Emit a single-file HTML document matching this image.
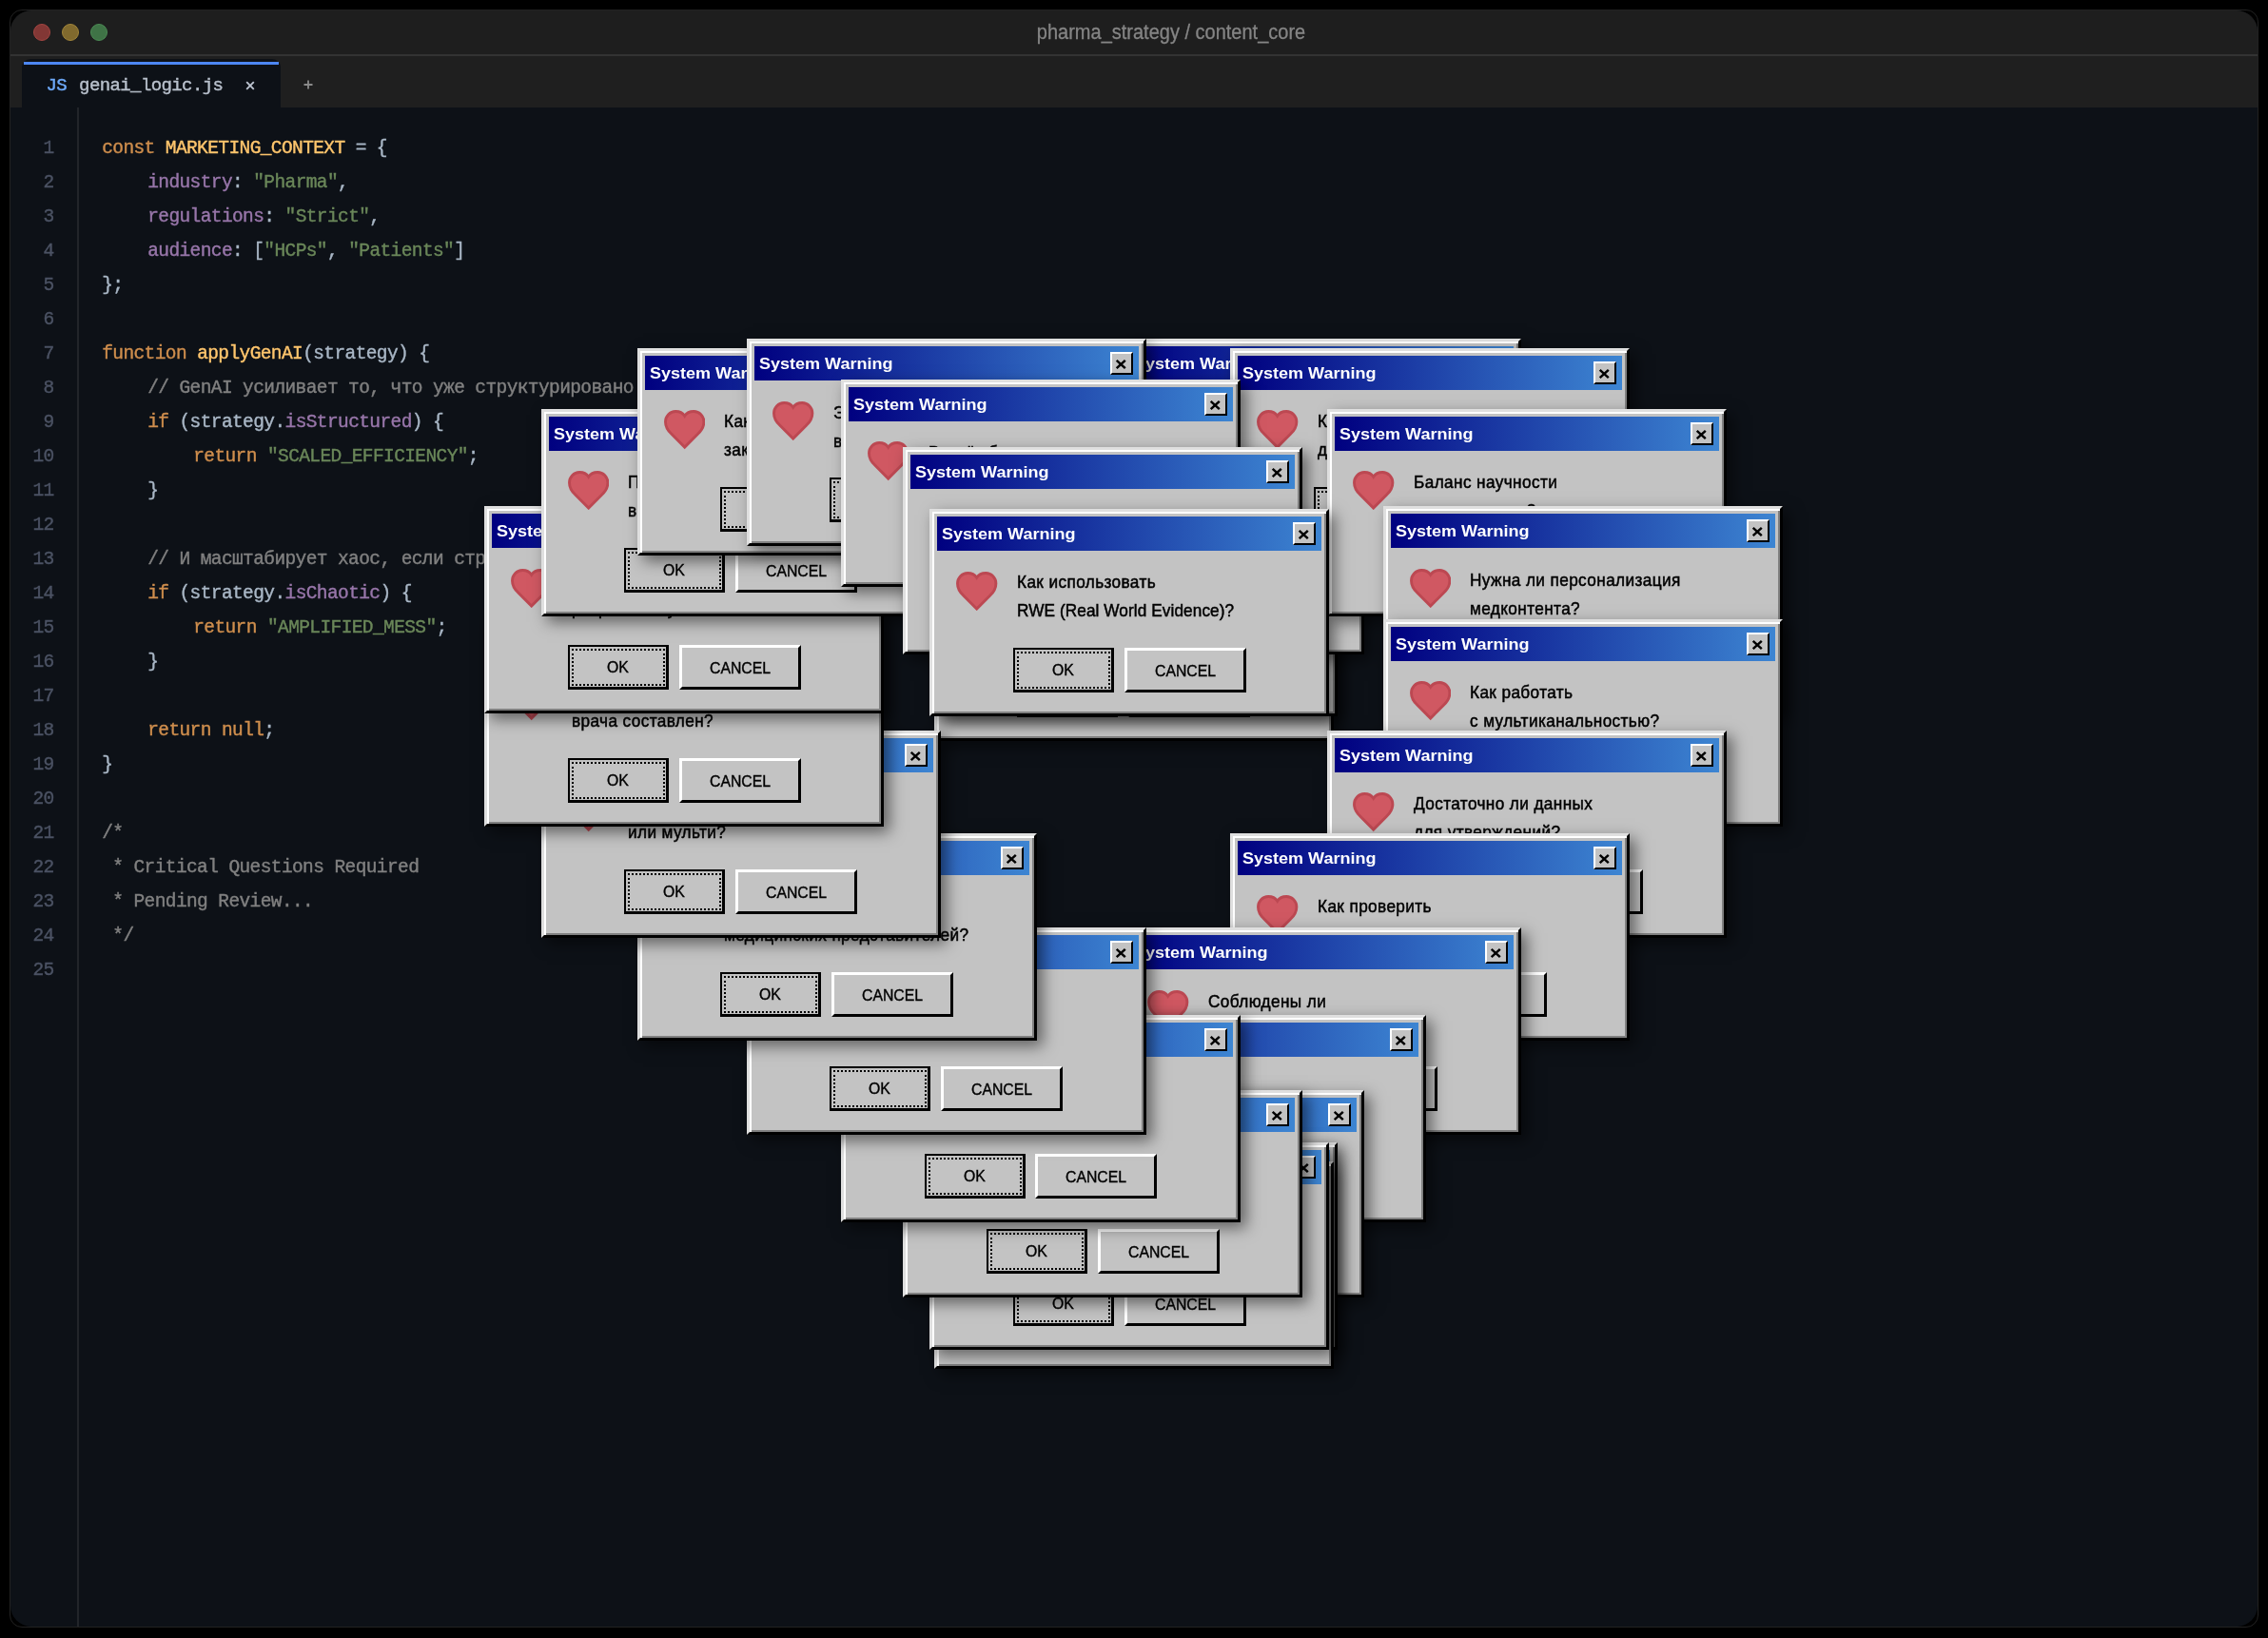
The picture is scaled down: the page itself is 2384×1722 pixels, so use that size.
<!DOCTYPE html>
<html lang="ru"><head><meta charset="utf-8"><title>genai_logic.js</title>
<style>
html,body{margin:0;padding:0;background:#000;}
body{width:2384px;height:1722px;overflow:hidden;position:relative;font-family:"Liberation Sans",sans-serif;}
.win{position:absolute;left:10px;top:10px;width:2362px;height:1699px;border:1px solid #222;border-radius:13px;overflow:hidden;background:#000;}
.inner{position:absolute;left:0;top:0;right:0;bottom:0;border-radius:22px;overflow:hidden;background:#0d1117;}
.pg{position:absolute;left:-11px;top:-11px;width:2384px;height:1722px;will-change:transform;}
.titlebar{position:absolute;left:0;top:0;width:2384px;height:57px;background:#1e1e1e;border-bottom:2px solid #333;}
.tl{position:absolute;top:25px;width:16px;height:16px;border-radius:50%;border:1px solid;}
.tl.r{left:35px;background:#823735;border-color:#a34541;}
.tl.y{left:65px;background:#816a2e;border-color:#a1853a;}
.tl.g{left:95px;background:#3f7346;border-color:#4b8a54;}
.title{-webkit-text-stroke:.3px currentColor;position:absolute;left:931px;width:600px;top:14px;height:40px;line-height:40px;text-align:center;font-size:21.5px;transform:scaleX(.93);color:#858585;white-space:nowrap;}
.tabbar{position:absolute;left:0;top:59px;width:2384px;height:54px;background:#1f1f1f;}
.tab{position:absolute;left:23px;top:62px;width:272px;height:51px;background:#0d1117;border-radius:9px 9px 0 0;}
.tab .bar{position:absolute;left:2px;right:2px;top:3px;height:3px;background:#4d87f3;}
.tjs,.tfn{-webkit-text-stroke:.4px currentColor;position:absolute;top:69.5px;height:40px;line-height:40px;font-family:"Liberation Mono",monospace;font-size:19px;letter-spacing:-0.6px;white-space:pre;}
.tjs{left:48.5px;color:#6eaafa;}
.tfn{left:83.1px;color:#b8c0cc;}
.tx{position:absolute;left:258px;top:84.5px;}
.tp{position:absolute;left:318.5px;top:84px;}
.gut{position:absolute;left:81px;top:113px;width:2px;height:1600px;background:#22252a;}
.ln,.cl{-webkit-text-stroke:.4px currentColor;position:absolute;height:36px;line-height:36px;font-family:"Liberation Mono",monospace;font-size:19.5px;letter-spacing:-0.6px;white-space:pre;}
.ln{left:0;width:56.6px;text-align:right;color:#4b5263;}
.cl{color:#a9b7c6;}
.k{color:#cf8e4d;}
.f{color:#ffc66d;}
.p{color:#9876aa;}
.s{color:#6a8759;}
.c{color:#808080;}

/* dialogs */
.dlg{position:absolute;box-sizing:border-box;width:420px;height:218px;background:#c3c3c3;border:3px solid;border-color:#dfdfdf #000 #000 #dfdfdf;box-shadow:inset 2px 2px 0 #fff,inset -2px -2px 0 #808080,6px 6px 15px rgba(0,0,0,.5);color:#000;}
.tb{position:absolute;left:5px;top:5px;width:404px;height:36px;background:linear-gradient(90deg,#000080,#3d85d2);}
.tt{position:absolute;left:5px;top:0;height:36px;line-height:38px;font-weight:bold;font-size:17px;color:#fff;white-space:nowrap;transform:scaleX(1.06);transform-origin:0 50%;}
.cb{position:absolute;box-sizing:border-box;left:374px;top:5.8px;width:24px;height:24px;background:#c3c3c3;border:2px solid;border-color:#fff #000 #000 #fff;}
.cb svg{position:absolute;left:0;top:0;display:block;}
.hrt{position:absolute;left:24.9px;top:62.5px;display:block;}
.msg{position:absolute;left:88.5px;top:59.3px;font-size:18.2px;line-height:30px;white-space:nowrap;letter-spacing:.42px;transform:scaleX(.945);transform-origin:0 50%;-webkit-text-stroke:.5px #000;}
.msg .lat{letter-spacing:.1px;}
.ok,.cn{position:absolute;box-sizing:border-box;top:142.8px;height:47px;background:#c3c3c3;font-size:16.4px;text-align:center;}
.ok{left:84.7px;width:106px;border:2px solid #000;border-right-width:3px;border-bottom-width:3px;}
.ok i{position:absolute;left:2px;top:2px;right:1px;bottom:1px;border:2px dotted #000;}
.cn{left:201.4px;width:128px;border:3px solid;border-color:#fff #000 #000 #fff;}
.ok b,.cn b{display:block;font-weight:normal;line-height:43px;font-size:16.8px;transform:scaleX(.94);-webkit-text-stroke:.4px #000;}

</style></head>
<body>
<div class="win"><div class="inner"><div class="pg">
<div class="titlebar"></div>
<div class="tl r"></div><div class="tl y"></div><div class="tl g"></div>
<div class="title">pharma_strategy / content_core</div>
<div class="tabbar"></div>
<div class="tab"><div class="bar"></div></div>
<div class="tjs">JS</div><div class="tfn">genai_logic.js</div>
<svg class="tx" viewBox="0 0 10 10" width="10" height="10"><path d="M1.2 1.2L8.8 8.8M8.8 1.2L1.2 8.8" stroke="#bcc4d0" stroke-width="1.9" fill="none"/></svg>
<svg class="tp" viewBox="0 0 10 10" width="10" height="10"><path d="M5 0.5V9.5M0.5 5H9.5" stroke="#8a8a8a" stroke-width="1.8" fill="none"/></svg>
<div class="gut"></div>
<div class="ln" style="top:138.0px">1</div>
<div class="cl" style="top:138.0px;left:107.2px"><span class="k">const</span> <span class="f">MARKETING_CONTEXT</span> = {</div>
<div class="ln" style="top:174.0px">2</div>
<div class="cl" style="top:174.0px;left:155.2px"><span class="p">industry</span>: <span class="s">&quot;Pharma&quot;</span>,</div>
<div class="ln" style="top:210.0px">3</div>
<div class="cl" style="top:210.0px;left:155.2px"><span class="p">regulations</span>: <span class="s">&quot;Strict&quot;</span>,</div>
<div class="ln" style="top:246.0px">4</div>
<div class="cl" style="top:246.0px;left:155.2px"><span class="p">audience</span>: [<span class="s">&quot;HCPs&quot;</span>, <span class="s">&quot;Patients&quot;</span>]</div>
<div class="ln" style="top:282.0px">5</div>
<div class="cl" style="top:282.0px;left:107.2px">};</div>
<div class="ln" style="top:318.0px">6</div>
<div class="ln" style="top:354.0px">7</div>
<div class="cl" style="top:354.0px;left:107.2px"><span class="k">function</span> <span class="f">applyGenAI</span>(strategy) {</div>
<div class="ln" style="top:390.0px">8</div>
<div class="cl" style="top:390.0px;left:155.2px"><span class="c">// GenAI усиливает то, что уже структурировано</span></div>
<div class="ln" style="top:426.0px">9</div>
<div class="cl" style="top:426.0px;left:155.2px"><span class="k">if</span> (strategy.<span class="p">isStructured</span>) {</div>
<div class="ln" style="top:462.0px">10</div>
<div class="cl" style="top:462.0px;left:203.2px"><span class="k">return</span> <span class="s">&quot;SCALED_EFFICIENCY&quot;</span>;</div>
<div class="ln" style="top:498.0px">11</div>
<div class="cl" style="top:498.0px;left:155.2px">}</div>
<div class="ln" style="top:534.0px">12</div>
<div class="ln" style="top:570.0px">13</div>
<div class="cl" style="top:570.0px;left:155.2px"><span class="c">// И масштабирует хаос, если структуры нет</span></div>
<div class="ln" style="top:606.0px">14</div>
<div class="cl" style="top:606.0px;left:155.2px"><span class="k">if</span> (strategy.<span class="p">isChaotic</span>) {</div>
<div class="ln" style="top:642.0px">15</div>
<div class="cl" style="top:642.0px;left:203.2px"><span class="k">return</span> <span class="s">&quot;AMPLIFIED_MESS&quot;</span>;</div>
<div class="ln" style="top:678.0px">16</div>
<div class="cl" style="top:678.0px;left:155.2px">}</div>
<div class="ln" style="top:714.0px">17</div>
<div class="ln" style="top:750.0px">18</div>
<div class="cl" style="top:750.0px;left:155.2px"><span class="k">return</span> <span class="k">null</span>;</div>
<div class="ln" style="top:786.0px">19</div>
<div class="cl" style="top:786.0px;left:107.2px">}</div>
<div class="ln" style="top:822.0px">20</div>
<div class="ln" style="top:858.0px">21</div>
<div class="cl" style="top:858.0px;left:107.2px"><span class="c">/*</span></div>
<div class="ln" style="top:894.0px">22</div>
<div class="cl" style="top:894.0px;left:107.2px"><span class="c">&nbsp;* Critical Questions Required</span></div>
<div class="ln" style="top:930.0px">23</div>
<div class="cl" style="top:930.0px;left:107.2px"><span class="c">&nbsp;* Pending Review...</span></div>
<div class="ln" style="top:966.0px">24</div>
<div class="cl" style="top:966.0px;left:107.2px"><span class="c">&nbsp;*/</span></div>
<div class="ln" style="top:1002.0px">25</div>
<div class="dlg" style="left:981.6px;top:560.9px"><div class="tb"><span class="tt">System Warning</span><span class="cb"><svg viewBox="0 0 20 20" width="20" height="20"><path d="M4.7 6.9L13.8 15.2M13.8 6.9L4.7 15.2" stroke="#000" stroke-width="2.5" fill="none"/></svg></span></div><svg class="hrt" viewBox="0 0 43.4 41.2" width="43.4" height="41.2"><path d="M21.7 6.3C19.8 3.4 16.2 1.5 12.2 1.5C6.2 1.5 1.5 6.3 1.5 12.4C1.5 17.5 4 21.6 7.9 25.2L21.7 39.1L35.5 25.2C39.4 21.6 41.9 17.5 41.9 12.4C41.9 6.3 37.2 1.5 31.2 1.5C27.2 1.5 23.6 3.4 21.7 6.3Z" fill="#d05862" stroke="#bc4852" stroke-width="2.9" stroke-linejoin="miter"/></svg><div class="msg">Кто наша целевая<br>аудитория сегодня?</div><div class="ok"><i></i><b>OK</b></div><div class="cn"><b>CANCEL</b></div></div>
<div class="dlg" style="left:985.9px;top:535.1px"><div class="tb"><span class="tt">System Warning</span><span class="cb"><svg viewBox="0 0 20 20" width="20" height="20"><path d="M4.7 6.9L13.8 15.2M13.8 6.9L4.7 15.2" stroke="#000" stroke-width="2.5" fill="none"/></svg></span></div><svg class="hrt" viewBox="0 0 43.4 41.2" width="43.4" height="41.2"><path d="M21.7 6.3C19.8 3.4 16.2 1.5 12.2 1.5C6.2 1.5 1.5 6.3 1.5 12.4C1.5 17.5 4 21.6 7.9 25.2L21.7 39.1L35.5 25.2C39.4 21.6 41.9 17.5 41.9 12.4C41.9 6.3 37.2 1.5 31.2 1.5C27.2 1.5 23.6 3.4 21.7 6.3Z" fill="#d05862" stroke="#bc4852" stroke-width="2.9" stroke-linejoin="miter"/></svg><div class="msg">Какие каналы<br>мы используем?</div><div class="ok"><i></i><b>OK</b></div><div class="cn"><b>CANCEL</b></div></div>
<div class="dlg" style="left:1013.9px;top:470.4px"><div class="tb"><span class="tt">System Warning</span><span class="cb"><svg viewBox="0 0 20 20" width="20" height="20"><path d="M4.7 6.9L13.8 15.2M13.8 6.9L4.7 15.2" stroke="#000" stroke-width="2.5" fill="none"/></svg></span></div><svg class="hrt" viewBox="0 0 43.4 41.2" width="43.4" height="41.2"><path d="M21.7 6.3C19.8 3.4 16.2 1.5 12.2 1.5C6.2 1.5 1.5 6.3 1.5 12.4C1.5 17.5 4 21.6 7.9 25.2L21.7 39.1L35.5 25.2C39.4 21.6 41.9 17.5 41.9 12.4C41.9 6.3 37.2 1.5 31.2 1.5C27.2 1.5 23.6 3.4 21.7 6.3Z" fill="#d05862" stroke="#bc4852" stroke-width="2.9" stroke-linejoin="miter"/></svg><div class="msg">Есть ли единый<br>контент-план?</div><div class="ok"><i></i><b>OK</b></div><div class="cn"><b>CANCEL</b></div></div>
<div class="dlg" style="left:1079.1px;top:398.9px"><div class="tb"><span class="tt">System Warning</span><span class="cb"><svg viewBox="0 0 20 20" width="20" height="20"><path d="M4.7 6.9L13.8 15.2M13.8 6.9L4.7 15.2" stroke="#000" stroke-width="2.5" fill="none"/></svg></span></div><svg class="hrt" viewBox="0 0 43.4 41.2" width="43.4" height="41.2"><path d="M21.7 6.3C19.8 3.4 16.2 1.5 12.2 1.5C6.2 1.5 1.5 6.3 1.5 12.4C1.5 17.5 4 21.6 7.9 25.2L21.7 39.1L35.5 25.2C39.4 21.6 41.9 17.5 41.9 12.4C41.9 6.3 37.2 1.5 31.2 1.5C27.2 1.5 23.6 3.4 21.7 6.3Z" fill="#d05862" stroke="#bc4852" stroke-width="2.9" stroke-linejoin="miter"/></svg><div class="msg">Кто утверждает<br>медицинский текст?</div><div class="ok"><i></i><b>OK</b></div><div class="cn"><b>CANCEL</b></div></div>
<div class="dlg" style="left:1178.6px;top:356.4px"><div class="tb"><span class="tt">System Warning</span><span class="cb"><svg viewBox="0 0 20 20" width="20" height="20"><path d="M4.7 6.9L13.8 15.2M13.8 6.9L4.7 15.2" stroke="#000" stroke-width="2.5" fill="none"/></svg></span></div><svg class="hrt" viewBox="0 0 43.4 41.2" width="43.4" height="41.2"><path d="M21.7 6.3C19.8 3.4 16.2 1.5 12.2 1.5C6.2 1.5 1.5 6.3 1.5 12.4C1.5 17.5 4 21.6 7.9 25.2L21.7 39.1L35.5 25.2C39.4 21.6 41.9 17.5 41.9 12.4C41.9 6.3 37.2 1.5 31.2 1.5C27.2 1.5 23.6 3.4 21.7 6.3Z" fill="#d05862" stroke="#bc4852" stroke-width="2.9" stroke-linejoin="miter"/></svg><div class="msg">Как измерить<br>эффективность?</div><div class="ok"><i></i><b>OK</b></div><div class="cn"><b>CANCEL</b></div></div>
<div class="dlg" style="left:1293.4px;top:365.9px"><div class="tb"><span class="tt">System Warning</span><span class="cb"><svg viewBox="0 0 20 20" width="20" height="20"><path d="M4.7 6.9L13.8 15.2M13.8 6.9L4.7 15.2" stroke="#000" stroke-width="2.5" fill="none"/></svg></span></div><svg class="hrt" viewBox="0 0 43.4 41.2" width="43.4" height="41.2"><path d="M21.7 6.3C19.8 3.4 16.2 1.5 12.2 1.5C6.2 1.5 1.5 6.3 1.5 12.4C1.5 17.5 4 21.6 7.9 25.2L21.7 39.1L35.5 25.2C39.4 21.6 41.9 17.5 41.9 12.4C41.9 6.3 37.2 1.5 31.2 1.5C27.2 1.5 23.6 3.4 21.7 6.3Z" fill="#d05862" stroke="#bc4852" stroke-width="2.9" stroke-linejoin="miter"/></svg><div class="msg">Как адаптировать<br>для пациентов?</div><div class="ok"><i></i><b>OK</b></div><div class="cn"><b>CANCEL</b></div></div>
<div class="dlg" style="left:1394.5px;top:429.8px"><div class="tb"><span class="tt">System Warning</span><span class="cb"><svg viewBox="0 0 20 20" width="20" height="20"><path d="M4.7 6.9L13.8 15.2M13.8 6.9L4.7 15.2" stroke="#000" stroke-width="2.5" fill="none"/></svg></span></div><svg class="hrt" viewBox="0 0 43.4 41.2" width="43.4" height="41.2"><path d="M21.7 6.3C19.8 3.4 16.2 1.5 12.2 1.5C6.2 1.5 1.5 6.3 1.5 12.4C1.5 17.5 4 21.6 7.9 25.2L21.7 39.1L35.5 25.2C39.4 21.6 41.9 17.5 41.9 12.4C41.9 6.3 37.2 1.5 31.2 1.5C27.2 1.5 23.6 3.4 21.7 6.3Z" fill="#d05862" stroke="#bc4852" stroke-width="2.9" stroke-linejoin="miter"/></svg><div class="msg">Баланс научности<br>и доступности?</div><div class="ok"><i></i><b>OK</b></div><div class="cn"><b>CANCEL</b></div></div>
<div class="dlg" style="left:1453.8px;top:532.3px"><div class="tb"><span class="tt">System Warning</span><span class="cb"><svg viewBox="0 0 20 20" width="20" height="20"><path d="M4.7 6.9L13.8 15.2M13.8 6.9L4.7 15.2" stroke="#000" stroke-width="2.5" fill="none"/></svg></span></div><svg class="hrt" viewBox="0 0 43.4 41.2" width="43.4" height="41.2"><path d="M21.7 6.3C19.8 3.4 16.2 1.5 12.2 1.5C6.2 1.5 1.5 6.3 1.5 12.4C1.5 17.5 4 21.6 7.9 25.2L21.7 39.1L35.5 25.2C39.4 21.6 41.9 17.5 41.9 12.4C41.9 6.3 37.2 1.5 31.2 1.5C27.2 1.5 23.6 3.4 21.7 6.3Z" fill="#d05862" stroke="#bc4852" stroke-width="2.9" stroke-linejoin="miter"/></svg><div class="msg">Нужна ли персонализация<br>медконтента?</div><div class="ok"><i></i><b>OK</b></div><div class="cn"><b>CANCEL</b></div></div>
<div class="dlg" style="left:1453.8px;top:650.9px"><div class="tb"><span class="tt">System Warning</span><span class="cb"><svg viewBox="0 0 20 20" width="20" height="20"><path d="M4.7 6.9L13.8 15.2M13.8 6.9L4.7 15.2" stroke="#000" stroke-width="2.5" fill="none"/></svg></span></div><svg class="hrt" viewBox="0 0 43.4 41.2" width="43.4" height="41.2"><path d="M21.7 6.3C19.8 3.4 16.2 1.5 12.2 1.5C6.2 1.5 1.5 6.3 1.5 12.4C1.5 17.5 4 21.6 7.9 25.2L21.7 39.1L35.5 25.2C39.4 21.6 41.9 17.5 41.9 12.4C41.9 6.3 37.2 1.5 31.2 1.5C27.2 1.5 23.6 3.4 21.7 6.3Z" fill="#d05862" stroke="#bc4852" stroke-width="2.9" stroke-linejoin="miter"/></svg><div class="msg">Как работать<br>с мультиканальностью?</div><div class="ok"><i></i><b>OK</b></div><div class="cn"><b>CANCEL</b></div></div>
<div class="dlg" style="left:1394.5px;top:767.9px"><div class="tb"><span class="tt">System Warning</span><span class="cb"><svg viewBox="0 0 20 20" width="20" height="20"><path d="M4.7 6.9L13.8 15.2M13.8 6.9L4.7 15.2" stroke="#000" stroke-width="2.5" fill="none"/></svg></span></div><svg class="hrt" viewBox="0 0 43.4 41.2" width="43.4" height="41.2"><path d="M21.7 6.3C19.8 3.4 16.2 1.5 12.2 1.5C6.2 1.5 1.5 6.3 1.5 12.4C1.5 17.5 4 21.6 7.9 25.2L21.7 39.1L35.5 25.2C39.4 21.6 41.9 17.5 41.9 12.4C41.9 6.3 37.2 1.5 31.2 1.5C27.2 1.5 23.6 3.4 21.7 6.3Z" fill="#d05862" stroke="#bc4852" stroke-width="2.9" stroke-linejoin="miter"/></svg><div class="msg">Достаточно ли данных<br>для утверждений?</div><div class="ok"><i></i><b>OK</b></div><div class="cn"><b>CANCEL</b></div></div>
<div class="dlg" style="left:1293.4px;top:875.9px"><div class="tb"><span class="tt">System Warning</span><span class="cb"><svg viewBox="0 0 20 20" width="20" height="20"><path d="M4.7 6.9L13.8 15.2M13.8 6.9L4.7 15.2" stroke="#000" stroke-width="2.5" fill="none"/></svg></span></div><svg class="hrt" viewBox="0 0 43.4 41.2" width="43.4" height="41.2"><path d="M21.7 6.3C19.8 3.4 16.2 1.5 12.2 1.5C6.2 1.5 1.5 6.3 1.5 12.4C1.5 17.5 4 21.6 7.9 25.2L21.7 39.1L35.5 25.2C39.4 21.6 41.9 17.5 41.9 12.4C41.9 6.3 37.2 1.5 31.2 1.5C27.2 1.5 23.6 3.4 21.7 6.3Z" fill="#d05862" stroke="#bc4852" stroke-width="2.9" stroke-linejoin="miter"/></svg><div class="msg">Как проверить<br>источники данных</div><div class="ok"><i></i><b>OK</b></div><div class="cn"><b>CANCEL</b></div></div>
<div class="dlg" style="left:1178.6px;top:975.4px"><div class="tb"><span class="tt">System Warning</span><span class="cb"><svg viewBox="0 0 20 20" width="20" height="20"><path d="M4.7 6.9L13.8 15.2M13.8 6.9L4.7 15.2" stroke="#000" stroke-width="2.5" fill="none"/></svg></span></div><svg class="hrt" viewBox="0 0 43.4 41.2" width="43.4" height="41.2"><path d="M21.7 6.3C19.8 3.4 16.2 1.5 12.2 1.5C6.2 1.5 1.5 6.3 1.5 12.4C1.5 17.5 4 21.6 7.9 25.2L21.7 39.1L35.5 25.2C39.4 21.6 41.9 17.5 41.9 12.4C41.9 6.3 37.2 1.5 31.2 1.5C27.2 1.5 23.6 3.4 21.7 6.3Z" fill="#d05862" stroke="#bc4852" stroke-width="2.9" stroke-linejoin="miter"/></svg><div class="msg">Соблюдены ли<br>требования закона?</div><div class="ok"><i></i><b>OK</b></div><div class="cn"><b>CANCEL</b></div></div>
<div class="dlg" style="left:1079.1px;top:1067.0px"><div class="tb"><span class="tt">System Warning</span><span class="cb"><svg viewBox="0 0 20 20" width="20" height="20"><path d="M4.7 6.9L13.8 15.2M13.8 6.9L4.7 15.2" stroke="#000" stroke-width="2.5" fill="none"/></svg></span></div><svg class="hrt" viewBox="0 0 43.4 41.2" width="43.4" height="41.2"><path d="M21.7 6.3C19.8 3.4 16.2 1.5 12.2 1.5C6.2 1.5 1.5 6.3 1.5 12.4C1.5 17.5 4 21.6 7.9 25.2L21.7 39.1L35.5 25.2C39.4 21.6 41.9 17.5 41.9 12.4C41.9 6.3 37.2 1.5 31.2 1.5C27.2 1.5 23.6 3.4 21.7 6.3Z" fill="#d05862" stroke="#bc4852" stroke-width="2.9" stroke-linejoin="miter"/></svg><div class="msg">Где хранить<br>ключевые сообщения?</div><div class="ok"><i></i><b>OK</b></div><div class="cn"><b>CANCEL</b></div></div>
<div class="dlg" style="left:1013.9px;top:1145.9px"><div class="tb"><span class="tt">System Warning</span><span class="cb"><svg viewBox="0 0 20 20" width="20" height="20"><path d="M4.7 6.9L13.8 15.2M13.8 6.9L4.7 15.2" stroke="#000" stroke-width="2.5" fill="none"/></svg></span></div><svg class="hrt" viewBox="0 0 43.4 41.2" width="43.4" height="41.2"><path d="M21.7 6.3C19.8 3.4 16.2 1.5 12.2 1.5C6.2 1.5 1.5 6.3 1.5 12.4C1.5 17.5 4 21.6 7.9 25.2L21.7 39.1L35.5 25.2C39.4 21.6 41.9 17.5 41.9 12.4C41.9 6.3 37.2 1.5 31.2 1.5C27.2 1.5 23.6 3.4 21.7 6.3Z" fill="#d05862" stroke="#bc4852" stroke-width="2.9" stroke-linejoin="miter"/></svg><div class="msg">Кто отвечает<br>за фармаконадзор?</div><div class="ok"><i></i><b>OK</b></div><div class="cn"><b>CANCEL</b></div></div>
<div class="dlg" style="left:985.9px;top:1200.9px"><div class="tb"><span class="tt">System Warning</span><span class="cb"><svg viewBox="0 0 20 20" width="20" height="20"><path d="M4.7 6.9L13.8 15.2M13.8 6.9L4.7 15.2" stroke="#000" stroke-width="2.5" fill="none"/></svg></span></div><svg class="hrt" viewBox="0 0 43.4 41.2" width="43.4" height="41.2"><path d="M21.7 6.3C19.8 3.4 16.2 1.5 12.2 1.5C6.2 1.5 1.5 6.3 1.5 12.4C1.5 17.5 4 21.6 7.9 25.2L21.7 39.1L35.5 25.2C39.4 21.6 41.9 17.5 41.9 12.4C41.9 6.3 37.2 1.5 31.2 1.5C27.2 1.5 23.6 3.4 21.7 6.3Z" fill="#d05862" stroke="#bc4852" stroke-width="2.9" stroke-linejoin="miter"/></svg><div class="msg">Как часто<br>обновлять контент?</div><div class="ok"><i></i><b>OK</b></div><div class="cn"><b>CANCEL</b></div></div>
<div class="dlg" style="left:981.6px;top:1220.9px"><div class="tb"><span class="tt">System Warning</span><span class="cb"><svg viewBox="0 0 20 20" width="20" height="20"><path d="M4.7 6.9L13.8 15.2M13.8 6.9L4.7 15.2" stroke="#000" stroke-width="2.5" fill="none"/></svg></span></div><svg class="hrt" viewBox="0 0 43.4 41.2" width="43.4" height="41.2"><path d="M21.7 6.3C19.8 3.4 16.2 1.5 12.2 1.5C6.2 1.5 1.5 6.3 1.5 12.4C1.5 17.5 4 21.6 7.9 25.2L21.7 39.1L35.5 25.2C39.4 21.6 41.9 17.5 41.9 12.4C41.9 6.3 37.2 1.5 31.2 1.5C27.2 1.5 23.6 3.4 21.7 6.3Z" fill="#d05862" stroke="#bc4852" stroke-width="2.9" stroke-linejoin="miter"/></svg><div class="msg">Нужен ли<br>единый tone of voice?</div><div class="ok"><i></i><b>OK</b></div><div class="cn"><b>CANCEL</b></div></div>
<div class="dlg" style="left:977.3px;top:1200.9px"><div class="tb"><span class="tt">System Warning</span><span class="cb"><svg viewBox="0 0 20 20" width="20" height="20"><path d="M4.7 6.9L13.8 15.2M13.8 6.9L4.7 15.2" stroke="#000" stroke-width="2.5" fill="none"/></svg></span></div><svg class="hrt" viewBox="0 0 43.4 41.2" width="43.4" height="41.2"><path d="M21.7 6.3C19.8 3.4 16.2 1.5 12.2 1.5C6.2 1.5 1.5 6.3 1.5 12.4C1.5 17.5 4 21.6 7.9 25.2L21.7 39.1L35.5 25.2C39.4 21.6 41.9 17.5 41.9 12.4C41.9 6.3 37.2 1.5 31.2 1.5C27.2 1.5 23.6 3.4 21.7 6.3Z" fill="#d05862" stroke="#bc4852" stroke-width="2.9" stroke-linejoin="miter"/></svg><div class="msg">Какие KPI<br>у контента?</div><div class="ok"><i></i><b>OK</b></div><div class="cn"><b>CANCEL</b></div></div>
<div class="dlg" style="left:949.3px;top:1145.9px"><div class="tb"><span class="tt">System Warning</span><span class="cb"><svg viewBox="0 0 20 20" width="20" height="20"><path d="M4.7 6.9L13.8 15.2M13.8 6.9L4.7 15.2" stroke="#000" stroke-width="2.5" fill="none"/></svg></span></div><svg class="hrt" viewBox="0 0 43.4 41.2" width="43.4" height="41.2"><path d="M21.7 6.3C19.8 3.4 16.2 1.5 12.2 1.5C6.2 1.5 1.5 6.3 1.5 12.4C1.5 17.5 4 21.6 7.9 25.2L21.7 39.1L35.5 25.2C39.4 21.6 41.9 17.5 41.9 12.4C41.9 6.3 37.2 1.5 31.2 1.5C27.2 1.5 23.6 3.4 21.7 6.3Z" fill="#d05862" stroke="#bc4852" stroke-width="2.9" stroke-linejoin="miter"/></svg><div class="msg">Есть ли<br>референсы?</div><div class="ok"><i></i><b>OK</b></div><div class="cn"><b>CANCEL</b></div></div>
<div class="dlg" style="left:884.1px;top:1067.0px"><div class="tb"><span class="tt">System Warning</span><span class="cb"><svg viewBox="0 0 20 20" width="20" height="20"><path d="M4.7 6.9L13.8 15.2M13.8 6.9L4.7 15.2" stroke="#000" stroke-width="2.5" fill="none"/></svg></span></div><svg class="hrt" viewBox="0 0 43.4 41.2" width="43.4" height="41.2"><path d="M21.7 6.3C19.8 3.4 16.2 1.5 12.2 1.5C6.2 1.5 1.5 6.3 1.5 12.4C1.5 17.5 4 21.6 7.9 25.2L21.7 39.1L35.5 25.2C39.4 21.6 41.9 17.5 41.9 12.4C41.9 6.3 37.2 1.5 31.2 1.5C27.2 1.5 23.6 3.4 21.7 6.3Z" fill="#d05862" stroke="#bc4852" stroke-width="2.9" stroke-linejoin="miter"/></svg><div class="msg">Как избежать<br>off-label?</div><div class="ok"><i></i><b>OK</b></div><div class="cn"><b>CANCEL</b></div></div>
<div class="dlg" style="left:784.6px;top:975.4px"><div class="tb"><span class="tt">System Warning</span><span class="cb"><svg viewBox="0 0 20 20" width="20" height="20"><path d="M4.7 6.9L13.8 15.2M13.8 6.9L4.7 15.2" stroke="#000" stroke-width="2.5" fill="none"/></svg></span></div><svg class="hrt" viewBox="0 0 43.4 41.2" width="43.4" height="41.2"><path d="M21.7 6.3C19.8 3.4 16.2 1.5 12.2 1.5C6.2 1.5 1.5 6.3 1.5 12.4C1.5 17.5 4 21.6 7.9 25.2L21.7 39.1L35.5 25.2C39.4 21.6 41.9 17.5 41.9 12.4C41.9 6.3 37.2 1.5 31.2 1.5C27.2 1.5 23.6 3.4 21.7 6.3Z" fill="#d05862" stroke="#bc4852" stroke-width="2.9" stroke-linejoin="miter"/></svg><div class="msg">Готова ли<br>команда к GenAI?</div><div class="ok"><i></i><b>OK</b></div><div class="cn"><b>CANCEL</b></div></div>
<div class="dlg" style="left:669.8px;top:875.9px"><div class="tb"><span class="tt">System Warning</span><span class="cb"><svg viewBox="0 0 20 20" width="20" height="20"><path d="M4.7 6.9L13.8 15.2M13.8 6.9L4.7 15.2" stroke="#000" stroke-width="2.5" fill="none"/></svg></span></div><svg class="hrt" viewBox="0 0 43.4 41.2" width="43.4" height="41.2"><path d="M21.7 6.3C19.8 3.4 16.2 1.5 12.2 1.5C6.2 1.5 1.5 6.3 1.5 12.4C1.5 17.5 4 21.6 7.9 25.2L21.7 39.1L35.5 25.2C39.4 21.6 41.9 17.5 41.9 12.4C41.9 6.3 37.2 1.5 31.2 1.5C27.2 1.5 23.6 3.4 21.7 6.3Z" fill="#d05862" stroke="#bc4852" stroke-width="2.9" stroke-linejoin="miter"/></svg><div class="msg">Как обучать<br>медицинских представителей?</div><div class="ok"><i></i><b>OK</b></div><div class="cn"><b>CANCEL</b></div></div>
<div class="dlg" style="left:568.7px;top:767.9px"><div class="tb"><span class="tt">System Warning</span><span class="cb"><svg viewBox="0 0 20 20" width="20" height="20"><path d="M4.7 6.9L13.8 15.2M13.8 6.9L4.7 15.2" stroke="#000" stroke-width="2.5" fill="none"/></svg></span></div><svg class="hrt" viewBox="0 0 43.4 41.2" width="43.4" height="41.2"><path d="M21.7 6.3C19.8 3.4 16.2 1.5 12.2 1.5C6.2 1.5 1.5 6.3 1.5 12.4C1.5 17.5 4 21.6 7.9 25.2L21.7 39.1L35.5 25.2C39.4 21.6 41.9 17.5 41.9 12.4C41.9 6.3 37.2 1.5 31.2 1.5C27.2 1.5 23.6 3.4 21.7 6.3Z" fill="#d05862" stroke="#bc4852" stroke-width="2.9" stroke-linejoin="miter"/></svg><div class="msg">Омниканал<br>или мульти?</div><div class="ok"><i></i><b>OK</b></div><div class="cn"><b>CANCEL</b></div></div>
<div class="dlg" style="left:509.4px;top:650.9px"><div class="tb"><span class="tt">System Warning</span><span class="cb"><svg viewBox="0 0 20 20" width="20" height="20"><path d="M4.7 6.9L13.8 15.2M13.8 6.9L4.7 15.2" stroke="#000" stroke-width="2.5" fill="none"/></svg></span></div><svg class="hrt" viewBox="0 0 43.4 41.2" width="43.4" height="41.2"><path d="M21.7 6.3C19.8 3.4 16.2 1.5 12.2 1.5C6.2 1.5 1.5 6.3 1.5 12.4C1.5 17.5 4 21.6 7.9 25.2L21.7 39.1L35.5 25.2C39.4 21.6 41.9 17.5 41.9 12.4C41.9 6.3 37.2 1.5 31.2 1.5C27.2 1.5 23.6 3.4 21.7 6.3Z" fill="#d05862" stroke="#bc4852" stroke-width="2.9" stroke-linejoin="miter"/></svg><div class="msg">Портрет<br>врача составлен?</div><div class="ok"><i></i><b>OK</b></div><div class="cn"><b>CANCEL</b></div></div>
<div class="dlg" style="left:509.4px;top:532.3px"><div class="tb"><span class="tt">System Warning</span><span class="cb"><svg viewBox="0 0 20 20" width="20" height="20"><path d="M4.7 6.9L13.8 15.2M13.8 6.9L4.7 15.2" stroke="#000" stroke-width="2.5" fill="none"/></svg></span></div><svg class="hrt" viewBox="0 0 43.4 41.2" width="43.4" height="41.2"><path d="M21.7 6.3C19.8 3.4 16.2 1.5 12.2 1.5C6.2 1.5 1.5 6.3 1.5 12.4C1.5 17.5 4 21.6 7.9 25.2L21.7 39.1L35.5 25.2C39.4 21.6 41.9 17.5 41.9 12.4C41.9 6.3 37.2 1.5 31.2 1.5C27.2 1.5 23.6 3.4 21.7 6.3Z" fill="#d05862" stroke="#bc4852" stroke-width="2.9" stroke-linejoin="miter"/></svg><div class="msg">Путь пациента<br>разработан уже?</div><div class="ok"><i></i><b>OK</b></div><div class="cn"><b>CANCEL</b></div></div>
<div class="dlg" style="left:568.7px;top:429.8px"><div class="tb"><span class="tt">System Warning</span><span class="cb"><svg viewBox="0 0 20 20" width="20" height="20"><path d="M4.7 6.9L13.8 15.2M13.8 6.9L4.7 15.2" stroke="#000" stroke-width="2.5" fill="none"/></svg></span></div><svg class="hrt" viewBox="0 0 43.4 41.2" width="43.4" height="41.2"><path d="M21.7 6.3C19.8 3.4 16.2 1.5 12.2 1.5C6.2 1.5 1.5 6.3 1.5 12.4C1.5 17.5 4 21.6 7.9 25.2L21.7 39.1L35.5 25.2C39.4 21.6 41.9 17.5 41.9 12.4C41.9 6.3 37.2 1.5 31.2 1.5C27.2 1.5 23.6 3.4 21.7 6.3Z" fill="#d05862" stroke="#bc4852" stroke-width="2.9" stroke-linejoin="miter"/></svg><div class="msg">Подходит ли<br>в этот канал?</div><div class="ok"><i></i><b>OK</b></div><div class="cn"><b>CANCEL</b></div></div>
<div class="dlg" style="left:669.8px;top:365.9px"><div class="tb"><span class="tt">System Warning</span><span class="cb"><svg viewBox="0 0 20 20" width="20" height="20"><path d="M4.7 6.9L13.8 15.2M13.8 6.9L4.7 15.2" stroke="#000" stroke-width="2.5" fill="none"/></svg></span></div><svg class="hrt" viewBox="0 0 43.4 41.2" width="43.4" height="41.2"><path d="M21.7 6.3C19.8 3.4 16.2 1.5 12.2 1.5C6.2 1.5 1.5 6.3 1.5 12.4C1.5 17.5 4 21.6 7.9 25.2L21.7 39.1L35.5 25.2C39.4 21.6 41.9 17.5 41.9 12.4C41.9 6.3 37.2 1.5 31.2 1.5C27.2 1.5 23.6 3.4 21.7 6.3Z" fill="#d05862" stroke="#bc4852" stroke-width="2.9" stroke-linejoin="miter"/></svg><div class="msg">Как учесть<br>законодательство?</div><div class="ok"><i></i><b>OK</b></div><div class="cn"><b>CANCEL</b></div></div>
<div class="dlg" style="left:784.6px;top:356.4px"><div class="tb"><span class="tt">System Warning</span><span class="cb"><svg viewBox="0 0 20 20" width="20" height="20"><path d="M4.7 6.9L13.8 15.2M13.8 6.9L4.7 15.2" stroke="#000" stroke-width="2.5" fill="none"/></svg></span></div><svg class="hrt" viewBox="0 0 43.4 41.2" width="43.4" height="41.2"><path d="M21.7 6.3C19.8 3.4 16.2 1.5 12.2 1.5C6.2 1.5 1.5 6.3 1.5 12.4C1.5 17.5 4 21.6 7.9 25.2L21.7 39.1L35.5 25.2C39.4 21.6 41.9 17.5 41.9 12.4C41.9 6.3 37.2 1.5 31.2 1.5C27.2 1.5 23.6 3.4 21.7 6.3Z" fill="#d05862" stroke="#bc4852" stroke-width="2.9" stroke-linejoin="miter"/></svg><div class="msg">Этично ли<br>в рекламе Rx?</div><div class="ok"><i></i><b>OK</b></div><div class="cn"><b>CANCEL</b></div></div>
<div class="dlg" style="left:884.1px;top:398.9px"><div class="tb"><span class="tt">System Warning</span><span class="cb"><svg viewBox="0 0 20 20" width="20" height="20"><path d="M4.7 6.9L13.8 15.2M13.8 6.9L4.7 15.2" stroke="#000" stroke-width="2.5" fill="none"/></svg></span></div><svg class="hrt" viewBox="0 0 43.4 41.2" width="43.4" height="41.2"><path d="M21.7 6.3C19.8 3.4 16.2 1.5 12.2 1.5C6.2 1.5 1.5 6.3 1.5 12.4C1.5 17.5 4 21.6 7.9 25.2L21.7 39.1L35.5 25.2C39.4 21.6 41.9 17.5 41.9 12.4C41.9 6.3 37.2 1.5 31.2 1.5C27.2 1.5 23.6 3.4 21.7 6.3Z" fill="#d05862" stroke="#bc4852" stroke-width="2.9" stroke-linejoin="miter"/></svg><div class="msg">Расчёт бюджета<br>на контент готов?</div><div class="ok"><i></i><b>OK</b></div><div class="cn"><b>CANCEL</b></div></div>
<div class="dlg" style="left:949.3px;top:470.4px"><div class="tb"><span class="tt">System Warning</span><span class="cb"><svg viewBox="0 0 20 20" width="20" height="20"><path d="M4.7 6.9L13.8 15.2M13.8 6.9L4.7 15.2" stroke="#000" stroke-width="2.5" fill="none"/></svg></span></div><svg class="hrt" viewBox="0 0 43.4 41.2" width="43.4" height="41.2"><path d="M21.7 6.3C19.8 3.4 16.2 1.5 12.2 1.5C6.2 1.5 1.5 6.3 1.5 12.4C1.5 17.5 4 21.6 7.9 25.2L21.7 39.1L35.5 25.2C39.4 21.6 41.9 17.5 41.9 12.4C41.9 6.3 37.2 1.5 31.2 1.5C27.2 1.5 23.6 3.4 21.7 6.3Z" fill="#d05862" stroke="#bc4852" stroke-width="2.9" stroke-linejoin="miter"/></svg><div class="msg">Кто владелец<br>стратегии?</div><div class="ok"><i></i><b>OK</b></div><div class="cn"><b>CANCEL</b></div></div>
<div class="dlg" style="left:977.3px;top:535.1px"><div class="tb"><span class="tt">System Warning</span><span class="cb"><svg viewBox="0 0 20 20" width="20" height="20"><path d="M4.7 6.9L13.8 15.2M13.8 6.9L4.7 15.2" stroke="#000" stroke-width="2.5" fill="none"/></svg></span></div><svg class="hrt" viewBox="0 0 43.4 41.2" width="43.4" height="41.2"><path d="M21.7 6.3C19.8 3.4 16.2 1.5 12.2 1.5C6.2 1.5 1.5 6.3 1.5 12.4C1.5 17.5 4 21.6 7.9 25.2L21.7 39.1L35.5 25.2C39.4 21.6 41.9 17.5 41.9 12.4C41.9 6.3 37.2 1.5 31.2 1.5C27.2 1.5 23.6 3.4 21.7 6.3Z" fill="#d05862" stroke="#bc4852" stroke-width="2.9" stroke-linejoin="miter"/></svg><div class="msg">Как использовать<br><span class="lat">RWE (Real World Evidence)?</span></div><div class="ok"><i></i><b>OK</b></div><div class="cn"><b>CANCEL</b></div></div>
</div></div></div>
</body></html>
